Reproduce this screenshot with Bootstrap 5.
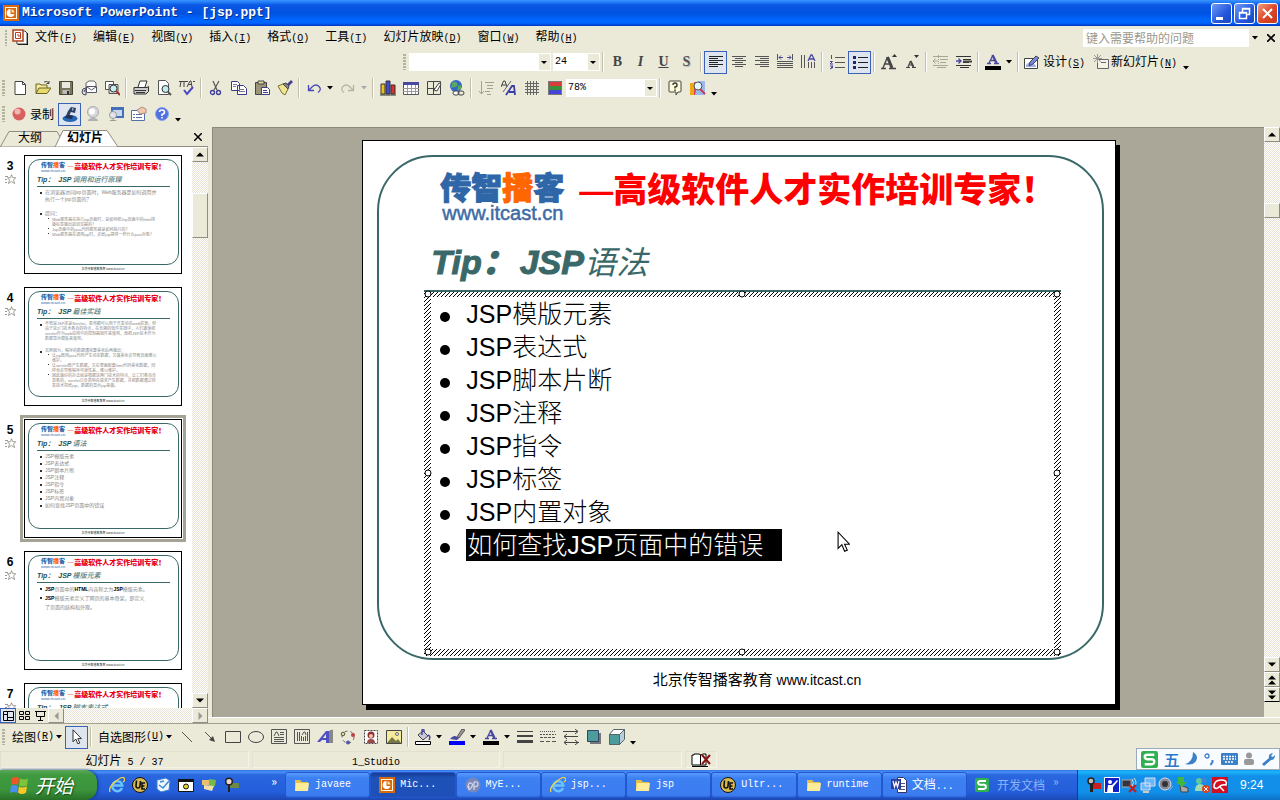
<!DOCTYPE html>
<html lang="zh-CN">
<head>
<meta charset="utf-8">
<meta name="viewport" content="width=device-width, initial-scale=1">
<title>Microsoft PowerPoint - [jsp.ppt]</title>
<link href="https://cdn.jsdelivr.net/npm/bootstrap@5.3.0/dist/css/bootstrap.min.css" rel="stylesheet">
<script src="https://cdn.jsdelivr.net/npm/bootstrap@5.3.0/dist/js/bootstrap.bundle.min.js" defer></script>
<style>
:root{--face:#ebe9d8;--work:#aaa798;--teal:#3a6868;--han:"Noto Sans CJK SC",sans-serif;--mono:"Liberation Mono","Noto Sans CJK SC",monospace}
body{font-family:var(--han);font-size:12px;line-height:16px;color:#000;background:var(--face)}
button,select,input{font:inherit;color:inherit}
button{background:none;border:0;padding:0}
svg{display:block;flex:none}
.lat{font-family:var(--mono);font-size:10px}
.lat u{text-underline-offset:1px}
.app{height:100vh;min-height:600px}
/* title bar */
.titlebar{height:26px;background:linear-gradient(#3a93ff 0,#2580f8 2px,#0a57e4 5px,#0052e0 13px,#0066ff 20px,#0066ff 23px,#0036c0 26px);padding:0 2px 0 3px}
.titlebar h1{font:bold 13px/20px var(--mono);color:#fff;text-shadow:1px 1px 0 #0a2a80;margin:0 0 0 3px}
.caps{gap:2px}
.cap{width:21px;height:21px;border:1px solid #fff;border-radius:3px;background:linear-gradient(135deg,#6f9bf5,#2456dd 60%,#1b46c0)}
.cap.quit{background:linear-gradient(135deg,#f0a080,#e0482a 50%,#c43818)}
/* menu and tool bars */
.menurow{height:23px;padding-left:5px}
.menurow nav{gap:16px;margin-left:6px}
.menurow nav a{color:#000;text-decoration:none;white-space:nowrap}
.grip{width:3px;height:16px;margin-right:3px;background:repeating-linear-gradient(#b5b29f 0 2px,transparent 2px 3px)}
.bar{height:26px;padding-left:2px}
.bar.format{padding-left:403px}
.tool{width:23px;height:23px;display:flex;align-items:center;justify-content:center;flex:none}
.tool.on{border:1px solid #3a62b8;background:#dfe5ee}
.face-b,.face-i,.face-u,.face-s{font:700 14px "Liberation Serif",serif;color:#444}
.face-b{font-weight:900}
.face-i{font-style:italic}
.face-s{color:#555;text-shadow:1px 1px 0 #bbb}
.wide{height:23px;display:flex;align-items:center;white-space:nowrap}
.dd{width:11px;height:23px;display:flex;align-items:center;justify-content:center;flex:none}
.dd.more{align-items:flex-end;padding-bottom:4px}
.rule-v{width:6px;height:20px;flex:none;background:linear-gradient(90deg,transparent 2px,#c2bfae 2px 3px,#fff 3px 4px,transparent 4px)}
.pick{appearance:none;border:0;border-radius:0;height:18px;padding:0 0 0 2px;font:10px/16px var(--mono);background:#fff url("data:image/svg+xml,%3Csvg xmlns='http://www.w3.org/2000/svg' width='13' height='18'%3E%3Cpath fill='%23ebe9d8' d='M1 1h11v16H1z'/%3E%3Cpath d='M3 8h6l-3 3z'/%3E%3C/svg%3E") right center no-repeat}
.ask{width:178px;height:18px}
.ask input{border:0;padding:0 3px;min-width:0;line-height:16px}
.ask input::placeholder{color:#9c998a;opacity:1}
.ask .dd{background:var(--face);width:12px}
/* side pane */
.side{width:208px}
.tabs{height:20px;border-bottom:1px solid #8f8d80;padding-right:2px;position:relative}
.tabs svg.shape{position:absolute;left:0;bottom:-1px}
.tabs button{position:relative;line-height:18px}
.outline{margin-left:18px;width:24px}
.slides{margin-left:25px}
.thumbs{background:#fff;overflow:hidden;padding:8px 0 0;margin:0;list-style:none}
.thumbs>li{height:132px;display:flex}
.num{width:20px;text-align:center;font:bold 12px/16px "Liberation Sans",sans-serif;padding-top:3px}
.num svg{margin:0 auto 0 5px}
.mini{width:158px;height:119px;margin-left:4px;border:1px solid #000;background:#fff;flex:none;white-space:nowrap;color:#888}
.sel .mini{outline:3px solid #a5a296;outline-offset:1px}
.mini-frame{height:106px;margin:3px 2px 0 3px;border:1px solid var(--teal);border-radius:12px;overflow:hidden}
.mini-head{height:14px;padding:2px 0 0 12px;gap:2px}
.mini-logo{font-size:6px;line-height:6px;font-weight:900;color:#2e66a8}
.mini-logo b{color:#f60}
.mini-logo small{display:block;font:4px/5px "Liberation Sans",sans-serif;color:#2e66a8}
.mini-red{font-size:7px;line-height:8px;font-weight:900;color:#e60012}
.mini h3{font:italic 500 7px/12px "Liberation Sans",var(--han);margin:0 8px;color:#5c8080;border-bottom:1px solid var(--teal);height:13px}
.mini h3 b{color:#1f4f4f;margin-right:1px}
.mini ul{list-style:none;margin:0;padding:2px 0 0 16px;font:5px/7px "Liberation Sans",var(--han)}
.mini li{position:relative}
.mini li::before{content:"";position:absolute;left:-5px;top:3px;width:2px;height:2px;background:#333}
.mini ul ul{padding:0 0 0 7px;font-size:4px;line-height:5px}
.mini ul ul li::before{width:1px;height:1px;left:-4px;top:1px}
.mini .dense,.mini .dense ul{font-size:4px;line-height:5px}
.mini .roomy{line-height:9px}
.mini .gap-row{margin-top:7px}
.mini p{margin:0;text-align:center;font:3px/9px "Liberation Sans",var(--han);color:#333}
.track{width:16px;background:repeating-conic-gradient(#fff 0 25%,#e6e3d4 0 50%) 0 0/2px 2px}
.sbtn{width:16px;height:15px;background:var(--face);border:1px solid;border-color:#fff #8f8d80 #8f8d80 #fff;display:flex;align-items:center;justify-content:center;flex:none}
.viewrow{height:15px}
.viewrow .tool{width:16px;height:15px}
/* slide */
.work{background:var(--work);border-left:1px solid #8b897c;border-top:1px solid #8b897c;margin-left:4px;padding-left:1px;position:relative;min-width:0}
.page{height:calc(100% - 24px);aspect-ratio:4/3;background:#fff;border:1px solid #000;box-shadow:4px 5px 0 #000}
.frame{margin:14px 11px 0 14px;border:2px solid var(--teal);border-radius:56px;min-height:0}
.brand{padding:12px 0 0 61px;height:81px}
.logo{font-size:31px;line-height:34px;font-weight:900;color:#2e66a8;white-space:nowrap;-webkit-text-stroke:1px}
.logo b{color:#f60;font-weight:900}
.site{font:20px/20px "Liberation Sans",sans-serif;color:#3d6ba5;padding-left:2px;-webkit-text-stroke:.5px}
.slogan{font:900 34px/38px var(--han);color:#f00;margin-left:15px;white-space:nowrap}
.slogan span{font-family:"Liberation Sans",sans-serif}
.frame h2{font:400 32px/44px var(--han);font-style:italic;color:var(--teal);margin:0 0 6px 52px;white-space:nowrap}
.frame h2 b{font-family:"Liberation Sans",var(--han);font-size:34px;font-weight:900;-webkit-text-stroke:1px}
.frame h2 b+b{margin-left:4px}
.textbox{margin:0 41px 2px 45px;border:7px solid transparent;position:relative;background:linear-gradient(#fff,#fff) padding-box,linear-gradient(var(--teal),var(--teal)) left top/100% 2px no-repeat border-box,url("data:image/svg+xml,%3Csvg xmlns='http://www.w3.org/2000/svg' width='4' height='4' shape-rendering='crispEdges'%3E%3Cpath fill='%23fff' d='M0 0h4v4H0z'/%3E%3Cpath d='M3 0h1v1H3zM2 1h1v1H2zM1 2h1v1H1zM0 3h1v1H0z'/%3E%3C/svg%3E") border-box}
.textbox ul{list-style:none;margin:0;padding:1px 0 0 35px;font:300 25px/32px "Liberation Sans",var(--han)}
.textbox li{position:relative;height:33px;white-space:pre}
.textbox li::before{content:"";position:absolute;left:-26px;top:14px;width:10px;height:10px;border-radius:50%;background:#000}
.textbox mark{display:inline-block;background:#000;color:#fff;padding:0 19px 0 1px;margin-top:-2px}
.knob{position:absolute;width:7px;height:7px;border:1px solid #000;border-radius:50%;background:#fff;transform:translate(-50%,-50%)}
.foot{height:44px;font:14px/38px "Liberation Sans",sans-serif;text-align:center;padding-left:36px}
.foot span{font:15px/38px var(--han)}
.cursor{position:absolute;left:59.4%;top:68.4%}
/* bottom bars */
.edge{border-top:1px solid #fff;height:6px;background:var(--face)}
.split{border-bottom:1px solid #a3a092}
.status{height:20px;gap:3px;padding:1px 0 2px}
.status>div{border:1px solid;border-color:#e2dfce #f5f3e8 #f5f3e8 #e2dfce;line-height:16px;text-align:center}
.ime{position:absolute;right:0;bottom:30px;width:144px;height:22px;background:#f8fbff;border:1px solid #9ab;z-index:2}
.ime span{font-size:16px;font-weight:500;color:#2878c8}
.taskbar{height:30px;background:linear-gradient(#2f6fe4 0,#4a90f8 2px,#2a66de 5px,#245edb 22px,#1c48b4 30px);color:#fff}
.start{width:97px;border-radius:0 12px 12px 0;background:linear-gradient(#5aa75a 0,#3f9a3f 5px,#3b943b 20px,#277027 30px);box-shadow:1px 0 3px #12368c;font-size:19px;font-style:italic;text-shadow:1px 1px 1px #134d13;gap:6px;padding-left:9px}
.quick{gap:7px;padding-left:12px;width:188px}
.task{flex:0 1 86px;min-width:0;height:26px;border:1px solid #2258cc;border-radius:3px;background:linear-gradient(#5a9bff 0,#3c81f3 5px,#3c7cf0 22px,#2f69dc);gap:5px;padding-left:8px;white-space:nowrap}
.task.active{background:linear-gradient(#163c94 0,#1e52b7 5px,#1e50b8)}
.task .lat{color:#fff}
.docs{gap:8px;color:#8cb4f8;width:102px;white-space:nowrap}
.tray{background:linear-gradient(#1a9af0 0,#18b4f8 2px,#1290e9 6px,#1290e9 22px,#0d70c8 30px);border-left:1px solid #0a3c9c;padding-left:8px;gap:2px;width:203px}
.tray time{font:12px/16px "Liberation Sans",sans-serif;margin-left:10px}
</style>
</head>
<body>
<svg width="0" height="0" class="position-absolute" aria-hidden="true"><defs>
<symbol id="dn" viewBox="0 0 7 4"><path d="M0 0h6L3 3.500z"/></symbol>
<symbol id="ppt" viewBox="0 0 16 16"><path fill="#d8690e" d="M0 0h16v16H0z"/><path fill="#fff6e0" d="M2 2h12v12H2z"/><path fill="#d8690e" d="M3 3h10v10H3z"/><path fill="#fff" d="M7.500 4a4 4 0 1 0 4 5H7.500z"/><path fill="#ffe0a0" d="M8.500 4a4 4 0 0 1 3 3.500h-3z"/></symbol>
<symbol id="pdoc" viewBox="0 0 17 17"><path d="M6 4h10v12H6z" fill="#000"/><path d="M4 2h9l2 2v11H5z" fill="#fff" stroke="#444"/><path d="M1 1h10v11H1z" fill="#fff" stroke="#b5401c" stroke-width="1.500"/><path d="M3.500 3.500h5v6h-5z" fill="none" stroke="#b5401c"/><path d="M6 5v2h2" stroke="#b5401c" fill="none"/></symbol>
<symbol id="new" viewBox="0 0 16 16"><path d="M3 1.500h7.500l3 3v10H3z" fill="#fff" stroke="#444"/><path d="M10.500 1.500v3h3" fill="none" stroke="#444"/></symbol>
<symbol id="open" viewBox="0 0 16 16"><path d="M1 13V4h4l1 1h6v3" fill="#f5e9a0" stroke="#6b6420"/><path d="M1 13.500 4 8h12l-4 5.500z" fill="#e8d870" stroke="#6b6420"/><path d="M9 2q3-1.500 5 1m0-2v2.500h-2.500" fill="none" stroke="#444"/></symbol>
<symbol id="save" viewBox="0 0 16 16"><path d="M1.500 1.500h13v13h-13z" fill="#77775c" stroke="#444430"/><path d="M4 2h8v6H4z" fill="#e8e8e0"/><path d="M4.500 10h7v4h-7z" fill="#bbb"/><path d="M9 11h2v3H9z" fill="#333"/></symbol>
<symbol id="mail" viewBox="0 0 16 16"><path d="M5 7V3l3-2h5l2 2v6H5z" fill="#fff" stroke="#666"/><path d="M5.500 6.500h10v6h-10z" fill="#fff" stroke="#556"/><path d="m6 7 4.500 3L15 7" fill="none" stroke="#556"/><path d="M5 8q-4 0-4 4 0 3 4 3V9.500q-2 0-2 2.500" fill="none" stroke="#446"/></symbol>
<symbol id="find" viewBox="0 0 16 16"><path d="M1.500 1.500h8v8h-8z" fill="#fff" stroke="#555"/><path d="M5 4.500h9v9H5z" fill="#ddd" stroke="#555"/><circle cx="9.500" cy="8.500" r="3.500" fill="#c8f0f0" stroke="#333"/><path d="m12 11 4 4" stroke="#a33" stroke-width="2"/></symbol>
<symbol id="print" viewBox="0 0 16 16"><path d="m5 7 2-6h7l-2 6" fill="#fff" stroke="#333"/><path d="M1 7.500h13l1.500-1v5L13 14H1z" fill="#ccc" stroke="#333"/><path d="M2 10.500h11M3 12.500h9" stroke="#333"/></symbol>
<symbol id="prev" viewBox="0 0 16 16"><path d="M2.500.500h7l3 3v11h-10z" fill="#fff" stroke="#555"/><circle cx="9.500" cy="9" r="3.500" fill="#c4ecf0" stroke="#333"/><path d="m12 12 3 3" stroke="#555" stroke-width="2"/></symbol>
<symbol id="spell" viewBox="0 0 16 16"><path d="M0 1.500h6M2 1.500 1 7m4-5v5M8 7l3-6h1l1 6M9 4.500h4m1-3 2 0M6 1.500h3" fill="none" stroke="#444"/><path d="m5 10 3 4 6-7" fill="none" stroke="#4a4ac0" stroke-width="2"/></symbol>
<symbol id="cut" viewBox="0 0 16 16"><path d="m5 1 4 9m2-9L6 10" stroke="#555" stroke-width="1.200"/><circle cx="4.500" cy="12.500" r="2" fill="none" stroke="#3b3b98" stroke-width="1.300"/><circle cx="10.500" cy="12.500" r="2" fill="none" stroke="#3b3b98" stroke-width="1.300"/></symbol>
<symbol id="copy" viewBox="0 0 16 16"><path d="M.500 1.500h6l2 2v7h-8zM6.500 5.500h6l3 3v6h-9z" fill="#fff" stroke="#3b3b88"/><path d="M2 4.500h4M2 6.500h3M8 9.500h5M8 11.500h6" stroke="#778"/></symbol>
<symbol id="paste" viewBox="0 0 16 16"><path d="M1.500 2.500h11v12h-11z" fill="#9c9478" stroke="#444"/><path d="M4 1h6v3H4z" fill="#e0d8a0" stroke="#444"/><path d="M7.500 7.500h6l2 2v5h-8z" fill="#fff" stroke="#3b3b88"/><path d="M9 10.500h4M9 12.500h5" stroke="#3b3b88"/></symbol>
<symbol id="brush" viewBox="0 0 16 16"><path d="m1 6 5-2 5 5-3 6-3-2z" fill="#f0e690" stroke="#77703a"/><path d="m6 4 3-1 3 3-1 3z" fill="#888" stroke="#444"/><path d="m10 4 4-4 2 2-4 4z" fill="#44448c"/></symbol>
<symbol id="undo" viewBox="0 0 16 16"><path d="M2.500 5v5.500H8M3 10l3.500-3.500q3.500-3 6.500 0t-1 6" fill="none" stroke="#4848b8" stroke-width="1.300"/></symbol>
<symbol id="redo" viewBox="0 0 16 16"><path d="M13.500 5v5.500H8m5-.5L9.500 6.500Q6 3.500 3 6.500t1 6" fill="none" stroke="#b7b4a4" stroke-width="1.300"/></symbol>
<symbol id="chart" viewBox="0 0 16 16"><path d="M1 4h4v10H1z" fill="#e8c020" stroke="#333"/><path d="M6 1h4v13H6z" fill="#4848d0" stroke="#333"/><path d="M11 5h4v9h-4z" fill="#d83030" stroke="#333"/><path d="M0 15h16" stroke="#333"/></symbol>
<symbol id="table" viewBox="0 0 16 16"><path d="M.500 2.500h15v12H.500z" fill="#fff" stroke="#555"/><path d="M0 2h16v3H0z" fill="#4848a0"/><path d="M0 8.500h16M0 11.500h16M4.500 5v9M8.500 5v9M12.500 5v9" stroke="#999"/></symbol>
<symbol id="tb" viewBox="0 0 16 16"><path d="M1.500 1.500h13v13h-13zM1 8.500h8M7.500 1v14" fill="none" stroke="#444"/><path d="m8 10 5-7 2 1-4 7z" fill="#fff" stroke="#444"/></symbol>
<symbol id="link" viewBox="0 0 16 16"><circle cx="7" cy="6" r="6" fill="#3468c8"/><path d="M3 3q3-3 5 0T6 7 2 8zM9 6l3-1v4l-4 2z" fill="#58a860"/><rect x="4" y="11" width="6" height="4" rx="2" fill="#fff" stroke="#444"/><rect x="9" y="11" width="6" height="4" rx="2" fill="none" stroke="#444"/></symbol>
<symbol id="expand" viewBox="0 0 16 16"><path d="M3.500 1v13m-2.500-3 2.500 3 2.500-3M7 2.500h9M9 5.500h6M9 8.500h6M7 11.500h5M9 14.500h4" fill="none" stroke="#a3a091"/></symbol>
<symbol id="aa" viewBox="0 0 16 16"><path d="m0 7 2.500-6H4l2 6M1 5h4" fill="none" stroke="#444"/><path d="m5 15 6-9h2l1 9M8 12h6" fill="none" stroke="#3b3ba8" stroke-width="1.800"/><path d="M10 1 2 12" stroke="#666"/></symbol>
<symbol id="grid" viewBox="0 0 16 16"><path d="M1 3.500h14M1 6.500h14M1 9.500h14M1 12.500h14M3.500 1v14M6.500 1v14M9.500 1v14M12.500 1v14" stroke="#666"/></symbol>
<symbol id="color" viewBox="0 0 16 16"><path d="M1 1h14v5H1z" fill="#d83c3c"/><path d="M1 6h14v4H1z" fill="#389038"/><path d="M1 10h14v5H1z" fill="#4444d8"/><path d="M1.500 1.500h13v13h-13z" fill="none" stroke="#777"/></symbol>
<symbol id="help" viewBox="0 0 16 16"><path d="M3 1h10q1 0 1 1v9q0 1-1 1h-2l-2 3v-3H3q-1 0-1-1V2q0-1 1-1z" fill="#fffbd8" stroke="#444"/><path d="M6 5q0-2 2-2t2 2-2 2V8.500m0 1V11" fill="none" stroke="#333" stroke-width="1.400"/></symbol>
<symbol id="research" viewBox="0 0 16 16"><path d="M0 3h4v12H0z" fill="#f0a818"/><path d="M4 2h4v13H4z" fill="#d84848"/><path d="M8 1h7v14H5z" fill="#9bb8f0"/><circle cx="8" cy="6" r="4" fill="#e4f8ff" stroke="#555"/><path d="m10 9 5 5" stroke="#c04050" stroke-width="2"/></symbol>
<symbol id="al" viewBox="0 0 16 16"><path d="M1 2.500h14M1 4.500h9M1 6.500h14M1 8.500h9M1 10.500h14M1 12.500h9" stroke="#222"/></symbol>
<symbol id="ac" viewBox="0 0 16 16"><path d="M1 2.500h14M4 4.500h8M1 6.500h14M4 8.500h8M1 10.500h14M4 12.500h8" stroke="#555"/></symbol>
<symbol id="ar" viewBox="0 0 16 16"><path d="M1 2.500h14M6 4.500h9M1 6.500h14M6 8.500h9M1 10.500h14M6 12.500h9" stroke="#555"/></symbol>
<symbol id="dist" viewBox="0 0 16 16"><path d="M.500 0v6M15.500 0v6" stroke="#555"/><path d="M0 7.500h16M0 9.500h16M0 11.500h16M0 13.500h16" stroke="#555"/><path d="M2 3.500h4m-2-2-2 2 2 2M14 3.500h-4m2-2 2 2-2 2" stroke="#4848a0" fill="none"/></symbol>
<symbol id="vert" viewBox="0 0 16 16"><path d="M1.500 1v13M4.500 1v13M8.500 8v6M11.500 8v6M14.500 8v6" stroke="#555"/><path d="m8 7 3-6h1l3 6M9 5h5" stroke="#4848a0" fill="none" stroke-width="1.300"/></symbol>
<symbol id="nums" viewBox="0 0 16 16"><path d="M2.500 1v4M1 7.500h2.500L1 10h3M1 12h3l-2 1.500h2L1 15" stroke="#4848a0" fill="none"/><path d="M6 3.500h10M6 8.500h10M6 13.500h10" stroke="#555"/></symbol>
<symbol id="buls" viewBox="0 0 16 16"><path d="M1 2h3v3H1zM1 7h3v3H1zM1 12h3v3H1z" fill="#222270"/><path d="M6 3.500h10M6 8.500h10M6 13.500h10" stroke="#222"/></symbol>
<symbol id="bigA" viewBox="0 0 16 16"><path d="m2 14 4.500-11M4 10h6M0 14.500h5M8 14.500h7" fill="none" stroke="#444" stroke-width="1.400"/><path d="m6.500 3 4.500 11" stroke="#444" stroke-width="3"/><path d="m11 3 2.500-3L16 3z" fill="#333"/></symbol>
<symbol id="smA" viewBox="0 0 16 16"><path d="m4 13 2.500-6M5 11h4M2 13.500h4M8 13.500h4" fill="none" stroke="#444" stroke-width="1.200"/><path d="m6.500 7 3 6" stroke="#444" stroke-width="2"/><path d="M10 1h5l-2.500 3z" fill="#333"/></symbol>
<symbol id="ind" viewBox="0 0 16 16"><path d="M0 2.500h15M7 5.500h8M7 8.500h6M0 11.500h15M4 13.500h9" stroke="currentColor"/><path d="M5 7H0m2.500-2.500L0 7l2.500 2.500" fill="none" stroke="currentColor"/><path d="M5.500 1v14" stroke="currentColor" stroke-dasharray="1 1"/></symbol>
<symbol id="ind2" viewBox="0 0 16 16"><path d="M0 2.500h15M7 5.500h8M7 8.500h6M0 11.500h15M4 13.500h9" stroke="#333"/><path d="M7 6.500h9v2H7z" fill="#444"/><path d="M0 7h5M2.500 4.500 5 7 2.500 9.500" fill="none" stroke="#4848a0" stroke-width="1.300"/></symbol>
<symbol id="fa" viewBox="0 0 16 16"><path d="m4 9 4-8M5.500 6.500h5M2 9.500h4M9 9.500h5" fill="none" stroke="#4848a0" stroke-width="1.300"/><path d="m7.500 1 4 8" stroke="#4848a0" stroke-width="2.400"/><path d="M0 12h16v4H0z"/></symbol>
<symbol id="design" viewBox="0 0 16 16"><path d="M.500 4.500h13v10H.500z" fill="#fff" stroke="#444"/><path d="M2 11q4-6 10 1v1H2z" fill="#a0b0f0"/><path d="m5 12 1-4 6-6 3 2-6 6z" fill="#7888e0" stroke="#444"/></symbol>
<symbol id="nslide" viewBox="0 0 16 16"><path d="M4.500 5.500h11v9h-11z" fill="#f4f2e6" stroke="#666"/><path d="M0 4.500h9M4.500 0v9M1 1l7 7M8 1 1 8" stroke="#999"/><path d="M8 8.500h5" stroke="#666"/></symbol>
<symbol id="rec" viewBox="0 0 16 16"><circle cx="8" cy="8" r="6.500" fill="#d86060"/><circle cx="6.500" cy="5.500" r="3" fill="#f0b8b0"/></symbol>
<symbol id="mic" viewBox="0 0 16 16"><ellipse cx="8" cy="12.500" rx="7.500" ry="3.500" fill="#2868b8"/><path d="m9 1 5 1-1 5-4-1-3 6H3l3-7z" fill="#304060"/><path d="M3 12q3-5 8-2l-1 3z" fill="#203050"/><path d="m10 2 2 1-2 2z" fill="#90b8e8"/></symbol>
<symbol id="cam" viewBox="0 0 16 16"><circle cx="8" cy="6" r="5.500" fill="#d8d8e0" stroke="#aaa"/><circle cx="7" cy="5.500" r="3" fill="#fff"/><path d="M3 15q0-3 5-3t5 3z" fill="#b0b0b8"/></symbol>
<symbol id="camw" viewBox="0 0 16 16"><path d="M3 1h13v11H3z" fill="#4470b8"/><path d="M5 4h9v6H5z" fill="#c8d8f0"/><circle cx="5" cy="9" r="3.500" fill="#e4e4e8" stroke="#999"/><path d="M1 15q4-3 8 0z" fill="#999"/></symbol>
<symbol id="prop" viewBox="0 0 16 16"><path d="M.500 4.500h13v10H.500z" fill="#fff" stroke="#5570a8"/><path d="M2 8.500h2m1 0h6M2 11.500h2m1 0h6" stroke="#5570a8"/><path d="m6 4 5-3 4 2v4l-6 1z" fill="#f0c8b0" stroke="#b09080"/></symbol>
<symbol id="q" viewBox="0 0 16 16"><circle cx="8" cy="8" r="6.500" fill="#5070e0" stroke="#8ca4f0"/><path d="M5.500 6q0-2 2.500-2t2.500 2-2.500 2.500V10m0 1v1.500" fill="none" stroke="#fff" stroke-width="1.600"/></symbol>
<symbol id="star" viewBox="0 0 11 11"><path d="m6.500.700 1.300 3h3L8.600 6l1 3.500-3.100-2-3 2 1-3.500-2-2.300h3z" fill="#fff" stroke="#8a887c" stroke-width=".8"/><path d="M0 2.500h3M0 5.500h2M0 8.500h2" stroke="#999"/></symbol>
<symbol id="ptr" viewBox="0 0 12 20"><path d="M1 1v15l3.500-3.500L7 18.500l2.500-1L7 12h4.500z" fill="#fff" stroke="#000"/></symbol>
<symbol id="wa" viewBox="0 0 16 16"><path d="m0 13 9-11h3v12H9v-3H5l-2 2z" fill="#5050c0"/><path d="M12 2q3-2 4-1v13h-4z" fill="#888"/><path d="m6 9 3-4v4z" fill="#ebe9d8"/></symbol>
<symbol id="dia" viewBox="0 0 16 16"><circle cx="8" cy="8" r="6" fill="none" stroke="#666" stroke-dasharray="3 3"/><circle cx="3" cy="5" r="1.800" fill="#e8e080" stroke="#555"/><circle cx="13" cy="6" r="2" fill="#c04040"/><circle cx="8" cy="13.500" r="2" fill="#5858a8"/></symbol>
<symbol id="clip" viewBox="0 0 16 16"><path d="M1.500 1.500h13v13h-13z" fill="#fff" stroke="#444" stroke-dasharray="2 1"/><circle cx="8" cy="6" r="3.500" fill="#8c3030"/><circle cx="8" cy="7" r="2" fill="#f0c8b0"/><path d="M4 14q0-4 4-4t4 4z" fill="#9a4848"/></symbol>
<symbol id="pic" viewBox="0 0 16 16"><path d="M.500 1.500h15v13H.500z" fill="#f4ec9c" stroke="#444"/><path d="m1 14 5-6 4 4 2-2 3 4z" fill="#777748"/><circle cx="11" cy="5" r="1.500" fill="#fff" stroke="#666"/></symbol>
<symbol id="fill" viewBox="0 0 16 16"><path d="m3 6 5-4 5 5-5 4z" fill="#c8c8d8" stroke="#444"/><path d="M7 6V1q1-1 2 0v2m4 3q3 1 1 5" fill="none" stroke="#4848a0" stroke-width="1.500"/><path d="M.500 12.500h15v3H.500z" fill="#fff" stroke="#000"/></symbol>
<symbol id="pen" viewBox="0 0 16 16"><path d="m8 8 5-8 3 1-6 8z" fill="#999" stroke="#555"/><path d="M1 10q4-5 7-2l2 1-2 2z" fill="#4848a0"/><path d="M0 12h16v4H0z" fill="#00f"/></symbol>
<symbol id="book" viewBox="0 0 21 14"><path d="M1 2h2V1h5l2 1 2-1h3v11H1z" fill="#fff" stroke="#000"/><path d="M9.500 2v10M1 13.500h16" stroke="#000"/><path d="m11 2 8 9M19 2l-8 9" stroke="#8a1010" stroke-width="2"/></symbol>
<symbol id="win" viewBox="0 0 20 20"><path d="M3 3q4-2 7 0L9 10q-3-2-7 0z" fill="#f0562a"/><path d="M11 3.500q4 2 8 0l-1 7q-4 2-8 0z" fill="#7cc43c"/><path d="M2 11q3-2 7 0l-1 7q-3-2-7 0z" fill="#4a90f0"/><path d="M10 11.500q3 2 8 0l-1 6q-4 3-8 0z" fill="#f8c828"/></symbol>
<symbol id="ie" viewBox="0 0 16 16"><path d="M13 11A5 5 0 1 1 13.300 8.500H4" fill="none" stroke="#68c4ff" stroke-width="2.500"/><path d="M1 15Q-1 11 6 5t9-4-1 4" fill="none" stroke="#f4d040" stroke-width="1.300"/></symbol>
<symbol id="ue" viewBox="0 0 16 16"><circle cx="8" cy="8" r="7.500" fill="#d8b850" stroke="#111"/><path d="M4.500 3.500 4 9q0 2 2 2t2-2l.5-5M13 6h-3v6h3M10 9h2.500" fill="none" stroke="#111" stroke-width="1.600"/></symbol>
<symbol id="qa" viewBox="0 0 16 16"><path d="m2 3 9-2 4 3-1 9-8 2-4-3z" fill="#f0f6ff" stroke="#3880d0"/><path d="m4 8 4 3 6-7M5 5l4-1" fill="none" stroke="#3a8cd8" stroke-width="1.500"/></symbol>
<symbol id="cmd" viewBox="0 0 16 16"><path d="M.500 2.500h15v12H.500z" fill="#fff" stroke="#111"/><path d="M0 2h16v3H0z" fill="#111"/><circle cx="8" cy="9.500" r="2.500" fill="#e0d030" stroke="#111"/></symbol>
<symbol id="box3" viewBox="0 0 16 16"><path d="M1 3h7v5H1z" fill="#e8c070"/><path d="m8 2 7 1-1 6H8z" fill="#78b848"/><path d="m3 8 10 1-2 5-8-2z" fill="#f0e0a8"/></symbol>
<symbol id="mag" viewBox="0 0 16 16"><path d="M6 6h9v5H6z" fill="#6e8848"/><circle cx="5" cy="4.500" r="3.300" fill="#e8d8d0" stroke="#222" stroke-width="1.500"/><path d="M4 8h2v7H4z" fill="#222"/></symbol>
<symbol id="fold" viewBox="0 0 16 16"><path d="M1 3h5l2 2h6v9H1z" fill="#e8c048"/><path d="M2 6h13l-1 8H1z" fill="#ffec98"/></symbol>
<symbol id="me" viewBox="0 0 16 16"><circle cx="8" cy="8" r="7.500" fill="#7888b8"/><path d="M3 11q0-6 3-5t0 5-2-2m5 4V5q4-1 4 2t-4 3" fill="none" stroke="#d8dcf0" stroke-width="1.200"/></symbol>
<symbol id="word" viewBox="0 0 16 16"><path d="M6.500.500h6l3 3v12h-9z" fill="#fff" stroke="#336"/><path d="M8 6.500h6M8 9.500h6M8 12.500h6" stroke="#558"/><path d="M0 2h10v10H0z" fill="#2a3c98"/><path d="m2 4 1.500 6L5 5l1.500 5L8 4" fill="none" stroke="#fff" stroke-width="1.200"/></symbol>
<symbol id="ess" viewBox="0 0 16 16"><rect width="16" height="16" rx="2" fill="#30b050"/><path d="M12.500 3.500H6q-2.500 0-2.500 2T6 7.800h4q2.500 0 2.500 2.200T10 12.500H3.500" fill="none" stroke="#fff" stroke-width="2.200"/></symbol>
</defs></svg>

<div class="app d-flex flex-column position-relative overflow-hidden">
<header class="titlebar d-flex align-items-center flex-shrink-0">
<svg width="16" height="16"><use href="#ppt"/></svg><h1>Microsoft PowerPoint - [jsp.ppt]</h1>
<div class="caps ms-auto d-flex">
<button class="cap" aria-label="最小化"><svg width="19" height="19"><path fill="#fff" d="M4 13h7v3H4z"/></svg></button>
<button class="cap" aria-label="还原"><svg width="19" height="19" fill="none" stroke="#fff"><path d="M7.500 8V4.500h7v6H12M7 5h8" stroke-width="1.500"/><path d="M4.500 8.500h7v6h-7zM4 9h8" stroke-width="1.500"/></svg></button>
<button class="cap quit" aria-label="关闭"><svg width="19" height="19"><path d="m5 5 9 9m0-9-9 9" stroke="#fff" stroke-width="2"/></svg></button>
</div></header>

<div class="menurow d-flex align-items-center flex-shrink-0">
<svg width="3" height="16" class="me-1"><path d="M1 0v16" stroke="#b5b29f" stroke-width="2" stroke-dasharray="2 1"/></svg><svg width="17" height="17"><use href="#pdoc"/></svg>
<nav class="d-flex">
<a href="#">文件<span class="lat">(<u>F</u>)</span></a><a href="#">编辑<span class="lat">(<u>E</u>)</span></a><a href="#">视图<span class="lat">(<u>V</u>)</span></a><a href="#">插入<span class="lat">(<u>I</u>)</span></a><a href="#">格式<span class="lat">(<u>O</u>)</span></a><a href="#">工具<span class="lat">(<u>T</u>)</span></a><a href="#">幻灯片放映<span class="lat">(<u>D</u>)</span></a><a href="#">窗口<span class="lat">(<u>W</u>)</span></a><a href="#">帮助<span class="lat">(<u>H</u>)</span></a>
</nav>
<div class="ask d-flex ms-auto bg-white"><input class="flex-grow-1" type="text" placeholder="键入需要帮助的问题" aria-label="键入需要帮助的问题"><button class="dd h-auto" aria-label="展开"><svg width="7" height="4"><use href="#dn"/></svg></button></div>
<button class="tool" aria-label="关闭窗口" style="width:19px"><svg width="8" height="8"><path d="m0 0 8 8m0-8L0 8" stroke="#000" stroke-width="1.600"/></svg></button>
</div>

<div class="bar format d-flex align-items-center flex-shrink-0">
<span class="grip"></span>
<select class="pick" style="width:142px;margin-right:2px" aria-label="字体"><option></option></select><select class="pick" style="width:47px" aria-label="字号"><option>24</option></select><span class="rule-v"></span>
<button class="tool" aria-label="加粗"><b class="face-b">B</b></button><button class="tool" aria-label="倾斜"><i class="face-i">I</i></button><button class="tool" aria-label="下划线"><u class="face-u">U</u></button><button class="tool" aria-label="阴影"><b class="face-s">S</b></button><span class="rule-v"></span>
<button class="tool on" aria-label="左对齐"><svg width="16" height="16"><use href="#al"/></svg></button><button class="tool" aria-label="居中"><svg width="16" height="16"><use href="#ac"/></svg></button><button class="tool" aria-label="右对齐"><svg width="16" height="16"><use href="#ar"/></svg></button><button class="tool" aria-label="分散对齐"><svg width="16" height="16"><use href="#dist"/></svg></button><button class="tool" aria-label="更改文字方向"><svg width="16" height="16"><use href="#vert"/></svg></button><span class="rule-v"></span>
<button class="tool" aria-label="编号"><svg width="16" height="16"><use href="#nums"/></svg></button><button class="tool on" aria-label="项目符号"><svg width="16" height="16"><use href="#buls"/></svg></button><span class="rule-v"></span>
<button class="tool" aria-label="增大字号"><svg width="16" height="16"><use href="#bigA"/></svg></button><button class="tool" aria-label="减小字号"><svg width="16" height="16"><use href="#smA"/></svg></button><span class="rule-v"></span>
<button class="tool" aria-label="减少缩进" style="color:#a8a595"><svg width="16" height="16"><use href="#ind"/></svg></button><button class="tool" aria-label="增加缩进"><svg width="16" height="16"><use href="#ind2"/></svg></button><span class="rule-v"></span>
<button class="tool" aria-label="字体颜色"><svg width="16" height="16"><use href="#fa"/></svg></button><button class="dd" aria-label="颜色"><svg width="7" height="4"><use href="#dn"/></svg></button><span class="rule-v"></span>
<button class="wide" style="gap:3px;padding:0 8px 0 3px"><svg width="16" height="16"><use href="#design"/></svg><span>设计<span class="lat">(<u>S</u>)</span></span></button><button class="wide" style="gap:2px"><svg width="16" height="16"><use href="#nslide"/></svg><span>新幻灯片<span class="lat">(<u>N</u>)</span></span></button><button class="dd more ms-1" aria-label="选项"><svg width="7" height="4"><use href="#dn"/></svg></button>
</div>

<div class="bar d-flex align-items-center flex-shrink-0">
<span class="grip"></span>
<button class="tool" aria-label="新建"><svg width="16" height="16"><use href="#new"/></svg></button><button class="tool" aria-label="打开"><svg width="16" height="16"><use href="#open"/></svg></button><button class="tool" aria-label="保存"><svg width="16" height="16"><use href="#save"/></svg></button><button class="tool" aria-label="邮件"><svg width="16" height="16"><use href="#mail"/></svg></button><button class="tool" aria-label="搜索"><svg width="16" height="16"><use href="#find"/></svg></button><span class="rule-v"></span>
<button class="tool" aria-label="打印"><svg width="16" height="16"><use href="#print"/></svg></button><button class="tool" aria-label="打印预览"><svg width="16" height="16"><use href="#prev"/></svg></button><button class="tool" aria-label="拼写检查"><svg width="16" height="16"><use href="#spell"/></svg></button><span class="rule-v"></span>
<button class="tool" aria-label="剪切"><svg width="16" height="16"><use href="#cut"/></svg></button><button class="tool" aria-label="复制"><svg width="16" height="16"><use href="#copy"/></svg></button><button class="tool" aria-label="粘贴"><svg width="16" height="16"><use href="#paste"/></svg></button><button class="tool" aria-label="格式刷"><svg width="16" height="16"><use href="#brush"/></svg></button><span class="rule-v"></span>
<button class="tool" aria-label="撤消"><svg width="16" height="16"><use href="#undo"/></svg></button><button class="dd" aria-label="撤消列表"><svg width="7" height="4"><use href="#dn"/></svg></button><button class="tool" aria-label="恢复"><svg width="16" height="16"><use href="#redo"/></svg></button><button class="dd" aria-label="恢复列表"><svg width="7" height="4" fill="#aaa"><use href="#dn"/></svg></button><span class="rule-v"></span>
<button class="tool" aria-label="图表"><svg width="16" height="16"><use href="#chart"/></svg></button><button class="tool" aria-label="表格"><svg width="16" height="16"><use href="#table"/></svg></button><button class="tool" aria-label="表格和边框"><svg width="16" height="16"><use href="#tb"/></svg></button><button class="tool" aria-label="超链接"><svg width="16" height="16"><use href="#link"/></svg></button><span class="rule-v"></span>
<button class="tool" aria-label="全部展开"><svg width="16" height="16"><use href="#expand"/></svg></button><button class="tool" aria-label="显示格式"><svg width="16" height="16"><use href="#aa"/></svg></button><button class="tool" aria-label="网格"><svg width="16" height="16"><use href="#grid"/></svg></button><button class="tool" aria-label="颜色"><svg width="16" height="16"><use href="#color"/></svg></button>
<select class="pick" style="width:91px" aria-label="显示比例"><option>78%</option></select><span class="rule-v"></span>
<button class="tool" aria-label="帮助"><svg width="16" height="16"><use href="#help"/></svg></button><button class="tool" aria-label="信息检索"><svg width="16" height="16"><use href="#research"/></svg></button><button class="dd more" aria-label="选项"><svg width="7" height="4"><use href="#dn"/></svg></button>
</div>

<div class="bar d-flex align-items-center flex-shrink-0">
<span class="grip"></span>
<button class="wide" style="gap:3px;padding:0 4px 0 3px"><svg width="16" height="16"><use href="#rec"/></svg><span>录制</span></button><button class="tool on" aria-label="麦克风"><svg width="16" height="16"><use href="#mic"/></svg></button><button class="tool" aria-label="摄像头"><svg width="16" height="16"><use href="#cam"/></svg></button><button class="tool" aria-label="录屏窗口"><svg width="16" height="16"><use href="#camw"/></svg></button><button class="tool" aria-label="属性"><svg width="16" height="16"><use href="#prop"/></svg></button><button class="tool" aria-label="帮助"><svg width="16" height="16"><use href="#q"/></svg></button><button class="dd more" aria-label="选项"><svg width="7" height="4"><use href="#dn"/></svg></button>
</div>

<main class="split d-flex flex-grow-1" style="min-height:0">
<section class="side d-flex flex-column flex-shrink-0">
<div class="tabs d-flex flex-shrink-0 align-items-center">
<svg class="shape" width="150" height="20"><path d="M.500 19.500 9 4.500h48l9 15" fill="#ebe9d8" stroke="#8f8d80"/><path d="M55 20 63 3.500h44L118 20z" fill="#fff" stroke="#8f8d80"/></svg>
<button class="outline">大纲</button><button class="slides fw-bold">幻灯片</button>
<button class="ms-auto px-1" aria-label="关闭窗格"><svg width="8" height="8"><path d="m0 0 8 8m0-8L0 8" stroke="#000" stroke-width="1.500"/></svg></button></div>
<div class="d-flex flex-grow-1" style="min-height:0">
<ol class="thumbs flex-grow-1">
<li><div class="num">3<svg width="11" height="11"><use href="#star"/></svg></div><div class="mini"><div class="mini-frame"><div class="mini-head d-flex"><div class="mini-logo">传智<b>播</b>客<small>www.itcast.cn</small></div><div class="mini-red">—高级软件人才实作培训专家！</div></div><h3><b>Tip：&nbsp; JSP</b>调用和运行原理</h3><ul><li>在浏览器访问jsp页面时，Web服务器是如何调用并<br>执行一个jsp页面的？</li><li class="gap-row">提问：<ul><li>Web服务器在执行jsp页面时，是如何把Jsp页面中的html排<br>版标签输出到浏览器的？</li><li>Jsp页面中的java代码服务器是如何执行的？</li><li>Web服务器在调用jsp时，会给jsp提供一些什么java对象？</li></ul></li></ul></div><p>北京传智播客教育 www.itcast.cn</p></div></li>
<li><div class="num">4<svg width="11" height="11"><use href="#star"/></svg></div><div class="mini"><div class="mini-frame"><div class="mini-head d-flex"><div class="mini-logo">传智<b>播</b>客<small>www.itcast.cn</small></div><div class="mini-red">—高级软件人才实作培训专家！</div></div><h3><b>Tip：&nbsp; JSP</b>最佳实践</h3><ul class="dense"><li>不管是JSP还是Servlet，虽然都可以用于开发动态web资源。但<br>由于这2门技术各自的特点，在长期的软件实践中，人们逐渐把<br>servlet作为web应用中的控制器组件来使用，而把JSP技术作为<br>数据显示模板来使用。</li><li class="gap-row">其原因为，程序的数据通常要美化后再输出：<ul><li>让jsp既用java代码产生动态数据，又做美化会导致页面难以<br>维护。</li><li>让servlet既产生数据，又在里面嵌套html代码美化数据，同<br>样也会导致程序可读性差，难以维护。</li><li>因此最好的办法就是根据这两门技术的特点，让它们各自负<br>责各的，servlet只负责响应请求产生数据，并把数据通过转<br>发技术带给jsp，数据的显示jsp来做。</li></ul></li></ul></div><p>北京传智播客教育 www.itcast.cn</p></div></li>
<li class="sel"><div class="num">5<svg width="11" height="11"><use href="#star"/></svg></div><div class="mini"><div class="mini-frame"><div class="mini-head d-flex"><div class="mini-logo">传智<b>播</b>客<small>www.itcast.cn</small></div><div class="mini-red">—高级软件人才实作培训专家！</div></div><h3><b>Tip：&nbsp; JSP</b>语法</h3><ul><li>JSP模版元素</li><li>JSP表达式</li><li>JSP脚本片断</li><li>JSP注释</li><li>JSP指令</li><li>JSP标签</li><li>JSP内置对象</li><li>如何查找JSP页面中的错误</li></ul></div><p>北京传智播客教育 www.itcast.cn</p></div></li>
<li><div class="num">6<svg width="11" height="11"><use href="#star"/></svg></div><div class="mini"><div class="mini-frame"><div class="mini-head d-flex"><div class="mini-logo">传智<b>播</b>客<small>www.itcast.cn</small></div><div class="mini-red">—高级软件人才实作培训专家！</div></div><h3><b>Tip：&nbsp; JSP</b>模版元素</h3><ul class="roomy"><li><b class="text-black">JSP</b>页面中的<b class="text-black">HTML</b>内容称之为<b class="text-black">JSP</b>模版元素。</li><li><b class="text-black">JSP</b>模版元素定义了网页的基本骨架，即定义<br>了页面的结构和外观。</li></ul></div><p>北京传智播客教育 www.itcast.cn</p></div></li>
<li><div class="num">7<svg width="11" height="11"><use href="#star"/></svg></div><div class="mini"><div class="mini-frame"><div class="mini-head d-flex"><div class="mini-logo">传智<b>播</b>客<small>www.itcast.cn</small></div><div class="mini-red">—高级软件人才实作培训专家！</div></div><h3><b>Tip：&nbsp; JSP</b>脚本表达式</h3></div></div></li>
</ol>
<div class="track d-flex flex-column"><button class="sbtn" aria-label="向上"><svg width="8" height="5"><path d="M0 4.500h8L4 .500z"/></svg></button><span style="flex:31"></span><span class="sbtn h-auto" style="flex:43"></span><span style="flex:457"></span><button class="sbtn" aria-label="向下"><svg width="8" height="5"><path d="M0 .500h8L4 4.500z"/></svg></button></div>
</div>
<div class="viewrow d-flex flex-shrink-0">
<button class="tool on" aria-label="普通视图"><svg width="11" height="10" fill="none" stroke="#000"><path d="M.500.500h10v9H.500zM4.500 0v9M5 6.500h6M1 3.500h3"/></svg></button><button class="tool" aria-label="幻灯片浏览"><svg width="11" height="10" fill="none" stroke="#000"><path d="M.500.500h4v3h-4zM6.500.500h4v3h-4zM.500 5.500h4v3h-4zM6.500 5.500h4v3h-4z"/></svg></button><button class="tool" aria-label="幻灯片放映"><svg width="11" height="10" fill="none" stroke="#000"><path d="M0 .500h11M1.500 1v4.500h8V1M5.500 6v4M3 9.500h5"/></svg></button>
<button class="sbtn" aria-label="向左"><svg width="5" height="8" fill="#999"><path d="M4.500 0v8L.500 4z"/></svg></button><span class="track flex-grow-1"></span><button class="sbtn" aria-label="向右"><svg width="5" height="8" fill="#999"><path d="M.500 0v8l4-4z"/></svg></button></div>
</section>
<div class="d-flex flex-column flex-grow-1" style="min-width:0">
<div class="d-flex flex-grow-1" style="min-height:0">
<section class="work d-flex flex-grow-1 align-items-center justify-content-center">
<article class="page d-flex flex-column">
<div class="frame d-flex flex-column flex-grow-1">
<div class="brand d-flex align-items-start"><div><div class="logo">传智<b>播</b>客</div><div class="site">www.itcast.cn</div></div><div class="slogan"><span>—</span>高级软件人才实作培训专家！</div></div>
<h2><b>Tip：</b><b>JSP</b>语法</h2>
<div class="textbox flex-grow-1">
<ul><li>JSP模版元素</li><li>JSP表达式</li><li>JSP脚本片断</li><li>JSP注释</li><li>JSP指令</li><li>JSP标签</li><li>JSP内置对象</li><li><mark>如何查找JSP页面中的错误</mark></li></ul>
<i class="knob" style="left:-3px;top:-3px"></i><i class="knob" style="left:50%;top:-3px"></i><i class="knob" style="left:calc(100% + 3px);top:-3px"></i><i class="knob" style="left:-3px;top:50%"></i><i class="knob" style="left:calc(100% + 3px);top:50%"></i><i class="knob" style="left:-3px;top:calc(100% + 3px)"></i><i class="knob" style="left:50%;top:calc(100% + 3px)"></i><i class="knob" style="left:calc(100% + 3px);top:calc(100% + 3px)"></i>
</div></div>
<div class="foot"><span>北京传智播客教育</span> www.itcast.cn</div>
</article>
<svg class="cursor" width="13" height="22"><use href="#ptr"/></svg>
</section>
<div class="d-flex flex-column" style="width:16px">
<div class="track d-flex flex-column flex-grow-1"><button class="sbtn" aria-label="向上"><svg width="8" height="5"><path d="M0 4.500h8L4 .500z"/></svg></button><span style="flex:61"></span><span class="sbtn h-auto" style="flex:13"></span><span style="flex:438"></span><button class="sbtn" aria-label="向下"><svg width="8" height="5"><path d="M0 .500h8L4 4.500z"/></svg></button></div>
<button class="sbtn" aria-label="上一张"><svg width="8" height="10"><path d="M0 4.500h8L4 .500zM0 9.500h8L4 5.500z"/></svg></button><button class="sbtn" style="border-bottom-color:#000" aria-label="下一张"><svg width="8" height="10"><path d="M0 .500h8L4 4.500zM0 5.500h8L4 9.500z"/></svg></button><span style="height:15px"></span></div>
</div>
<div class="edge"></div>
</div>
</main>

<div class="bar d-flex align-items-center flex-shrink-0">
<span class="grip"></span>
<button class="wide ps-1">绘图<span class="lat">(<u>R</u>)</span><span class="dd"><svg width="7" height="4"><use href="#dn"/></svg></span></button><button class="tool on" aria-label="选择对象"><svg width="10" height="16"><use href="#ptr"/></svg></button><span class="rule-v"></span><button class="wide ps-1">自选图形<span class="lat">(<u>U</u>)</span><span class="dd"><svg width="7" height="4"><use href="#dn"/></svg></span></button>
<button class="tool" aria-label="直线"><svg width="16" height="16"><path d="m3 3 10 10" stroke="#555"/></svg></button><button class="tool" aria-label="箭头"><svg width="16" height="16"><path d="m3 3 7 7" stroke="#555"/><path d="m13 13-6-2 4-4z" fill="#444"/></svg></button><button class="tool" aria-label="矩形"><svg width="16" height="16"><path d="M.500 2.500h15v11H.500z" fill="none" stroke="#444"/></svg></button><button class="tool" aria-label="椭圆"><svg width="16" height="16"><ellipse cx="8" cy="8" rx="7.500" ry="5.500" fill="none" stroke="#444"/></svg></button><button class="tool" aria-label="文本框"><svg width="16" height="16" fill="none" stroke="#555"><path d="M.500.500h15v14H.500zM3 7l2-4h1l2 4M9 3.500h4M9 5.500h4M3 8.500h10M3 10.500h10M3 12.500h10"/></svg></button><button class="tool" aria-label="竖排文本框"><svg width="16" height="16" fill="none" stroke="#555"><path d="M.500.500h15v14H.500zM3.500 3v9M5.500 3v9M7.500 7v5M9.500 8v4M11.500 7v5M13.500 3v9M8 6l2-3h1l1 3"/></svg></button><button class="tool" aria-label="艺术字"><svg width="16" height="16"><use href="#wa"/></svg></button><button class="tool" aria-label="图示"><svg width="16" height="16"><use href="#dia"/></svg></button><button class="tool" aria-label="剪贴画"><svg width="16" height="16"><use href="#clip"/></svg></button><button class="tool" aria-label="图片"><svg width="16" height="16"><use href="#pic"/></svg></button><span class="rule-v"></span>
<button class="tool" aria-label="填充颜色"><svg width="16" height="16"><use href="#fill"/></svg></button><button class="dd" aria-label="填充列表"><svg width="7" height="4"><use href="#dn"/></svg></button><button class="tool" aria-label="线条颜色"><svg width="16" height="16"><use href="#pen"/></svg></button><button class="dd" aria-label="线条列表"><svg width="7" height="4"><use href="#dn"/></svg></button><button class="tool" aria-label="字体颜色"><svg width="16" height="16"><use href="#fa"/></svg></button><button class="dd" aria-label="字体颜色列表"><svg width="7" height="4"><use href="#dn"/></svg></button>
<button class="tool" aria-label="线型"><svg width="16" height="16"><path d="M0 2h16v1H0zM0 6h16v2H0zM0 11h16v3H0z" fill="#444"/></svg></button><button class="tool" aria-label="虚线线型"><svg width="16" height="16" stroke="#555"><path d="M0 2.500h16" stroke-dasharray="1 1"/><path d="M0 5.500h16" stroke-dasharray="2 1"/><path d="M0 8.500h16" stroke-dasharray="3 1"/><path d="M0 12.500h16" stroke-dasharray="4 2"/></svg></button><button class="tool" aria-label="箭头样式"><svg width="16" height="16" fill="none" stroke="#444"><path d="M0 2.500h15M12 0l3 2.500L12 5M1 7.500h14M4 5 1 7.500 4 10M1 13.500h15M4 11l-3 2.500L4 16M12 11l3 2.500-3 2.500"/></svg></button><button class="tool" aria-label="阴影样式"><svg width="16" height="16"><path d="M4 4h11v11H4z" fill="#777"/><path d="M1.500 1.500h11v11h-11z" fill="#4c9c9c" stroke="#346"/></svg></button><button class="tool" aria-label="三维效果样式"><svg width="16" height="16" stroke="#566"><path d="M.500 5.500h10v10H.500z" fill="#4c9c9c"/><path d="m.500 5.500 4-5h11l-5 5z" fill="#fff"/><path d="m10.500 5.500 5-5v10l-5 5z" fill="#bcd"/></svg></button><button class="dd more" aria-label="选项"><svg width="7" height="4"><use href="#dn"/></svg></button>
</div>

<div class="status d-flex flex-shrink-0"><div style="width:249px">幻灯片<span class="lat"> 5 / 37</span></div><div style="width:248px"><span class="lat">1_Studio</span></div><div style="width:179px"></div><div class="d-flex justify-content-center align-items-center" style="width:32px"><svg width="21" height="14"><use href="#book"/></svg></div></div>
<div class="ime d-flex align-items-center justify-content-between px-1">
<svg width="17" height="17"><use href="#ess"/></svg><span>五</span><svg width="13" height="14"><path d="M8 0q6 4 3 9t-11 3q8-2 8-12z" fill="#3c80c8"/></svg><svg width="11" height="14" fill="none" stroke="#3c80c8" stroke-width="1.300"><circle cx="3" cy="4" r="2"/><path d="M8.500 8v2l-2 3" stroke-width="2"/></svg><svg width="17" height="12"><rect width="17" height="12" rx="1" fill="#3c80c8"/><path d="M2 3.500h13M2 6h13M4 9h9" stroke="#fff" stroke-width="1.500" stroke-dasharray="2 1"/></svg><svg width="12" height="14" fill="#999"><circle cx="6" cy="3.500" r="3"/><rect x="1" y="7" width="10" height="6" rx="2"/></svg><svg width="14" height="14"><path d="m1 12 7-6q-1-4 4-5l-2 3 2 1 2-2q0 5-4 5L3 14z" fill="#3c80c8"/></svg>
</div>

<footer class="taskbar d-flex flex-shrink-0">
<button class="start d-flex align-items-center flex-shrink-0 text-white"><svg width="20" height="20"><use href="#win"/></svg>开始</button>
<div class="quick d-flex align-items-center flex-shrink-0"><svg width="16" height="16"><use href="#ie"/></svg><svg width="16" height="16"><use href="#ue"/></svg><svg width="16" height="16"><use href="#qa"/></svg><svg width="16" height="16"><use href="#cmd"/></svg><svg width="16" height="16"><use href="#box3"/></svg><svg width="16" height="16"><use href="#mag"/></svg><span class="ms-auto me-2 pb-2">»</span></div>
<div class="d-flex flex-grow-1 align-items-center" style="min-width:0">
<button class="task d-flex align-items-center"><svg width="16" height="16"><use href="#fold"/></svg><span class="lat">javaee</span></button><button class="task active d-flex align-items-center"><svg width="16" height="16"><use href="#ppt"/></svg><span class="lat">Mic...</span></button><button class="task d-flex align-items-center"><svg width="16" height="16"><use href="#me"/></svg><span class="lat">MyE...</span></button><button class="task d-flex align-items-center"><svg width="16" height="16"><use href="#ie"/></svg><span class="lat">jsp...</span></button><button class="task d-flex align-items-center"><svg width="16" height="16"><use href="#fold"/></svg><span class="lat">jsp</span></button><button class="task d-flex align-items-center"><svg width="16" height="16"><use href="#ue"/></svg><span class="lat">Ultr...</span></button><button class="task d-flex align-items-center"><svg width="16" height="16"><use href="#fold"/></svg><span class="lat">runtime</span></button><button class="task d-flex align-items-center text-white"><svg width="16" height="16"><use href="#word"/></svg><span>文档<span class="lat">...</span></span></button>
<div class="docs d-flex align-items-center flex-shrink-0 ms-2"><svg width="14" height="14"><use href="#ess"/></svg>开发文档<span class="pb-2">»</span></div>
</div>
<div class="tray d-flex align-items-center flex-shrink-0">
<svg width="16" height="16"><path d="M7 6h8v6H7z" fill="#c82020"/><circle cx="5" cy="4" r="3" fill="#c8c0c0" stroke="#222" stroke-width="1.500"/><path d="M4 7h3v8H4z" fill="#222"/></svg>
<svg width="16" height="16"><path d="M.500.500h15v15H.500z" fill="#1020c8" stroke="#fff"/><circle cx="6" cy="5" r="2" fill="#fff"/><path d="m3 15 1-7h4l5-5 1 1-5 6v5z" fill="#fff"/></svg>
<svg width="16" height="16"><path d="M0 3h9v7H0z" fill="#334" stroke="#aaa"/><path d="M10 2q3 4 0 7m2-8q4 5 0 9" fill="none" stroke="#ddd"/><path d="m7 8 7 7m0-7-7 7" stroke="#d01818" stroke-width="2"/></svg>
<svg width="16" height="16"><path d="M5 1h10v8H5zM1 6h9v7H1z" fill="#68b8f8" stroke="#dde"/><path d="M3 15h6" stroke="#ccc" stroke-width="2"/></svg>
<svg width="16" height="16"><circle cx="7" cy="7" r="6" fill="#889" stroke="#ddd"/><circle cx="7" cy="7" r="3" fill="#333"/><path d="m11 14 4-5" stroke="#8ad"/></svg>
<svg width="16" height="16"><path d="m4 8 8 3v4H5z" fill="#aaa" stroke="#444"/><path d="M2 0h6v5h3L6 10 0 5h2z" fill="#40b840"/></svg>
<svg width="16" height="16"><circle cx="5" cy="4" r="3" fill="#60c8a0"/><circle cx="10" cy="3" r="2.500" fill="#4880d0"/><path d="M1 14q0-7 5-7t6 7z" fill="#a0dcb0"/><circle cx="12" cy="12" r="4" fill="#e04020"/><path d="m10 10 4 4m0-4-4 4" stroke="#fff"/></svg>
<svg width="16" height="16"><path d="M0 0h16v16H0z" fill="#d01020"/><path d="M2 10q0-7 7-7t5 5q-4-1-7 2T2 10zm5-1 5 5" fill="none" stroke="#fff" stroke-width="1.600"/></svg>
<time>9:24</time></div>
</footer>
</div>
</body>
</html>
